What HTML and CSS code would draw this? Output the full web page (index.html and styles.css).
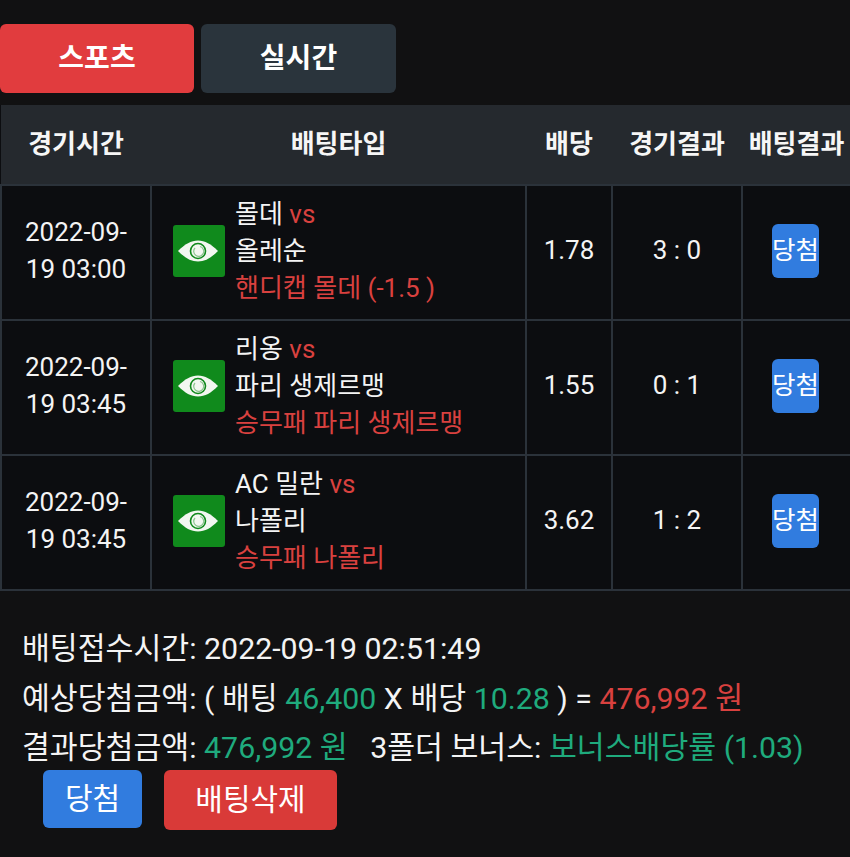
FILE: index.html
```html
<!DOCTYPE html>
<html lang="ko">

<head>
    <meta charset="UTF-8">
    <title>배팅내역</title>
    <meta name="viewport" content="width=device-width, initial-scale=1">
    <link rel="stylesheet" href="styles.css">
</head>

<body>
    <div class="tabs">
        <a class="tab tab-active">스포츠</a>
        <a class="tab">실시간</a>
    </div>

    <table class="bet-table">
        <colgroup>
            <col class="col-time">
            <col class="col-type">
            <col class="col-odds">
            <col class="col-score">
            <col class="col-result">
        </colgroup>
        <thead>
            <tr>
                <th>경기시간</th>
                <th>배팅타입</th>
                <th>배당</th>
                <th>경기결과</th>
                <th>배팅결과</th>
            </tr>
        </thead>
        <tbody>
            <tr>
                <td>2022-09-<br>19 03:00</td>
                <td>
                    <div class="match">
                        <span class="eye-box">
                            <svg viewBox="0 0 52 52" width="52" height="52">
                                <path class="eye-white" d="M5 26C12 19 18 15.5 25 15.5S38 19 45 26c-7 7-13 10.500-20 10.500S12 33 5 26z" />
                                <circle class="eye-ring" cx="25" cy="26" r="7.500" />
                                <path class="eye-notch" d="M27 21.500a5 5 0 1 1-5 1.500" />
                            </svg>
                        </span>
                        <div class="match-text">
                            <div>몰데 <span class="red">vs</span></div>
                            <div>올레순</div>
                            <div class="red">핸디캡 몰데 (-1.5 )</div>
                        </div>
                    </div>
                </td>
                <td>1.78</td>
                <td>3 : 0</td>
                <td><span class="win-badge">당첨</span></td>
            </tr>
            <tr>
                <td>2022-09-<br>19 03:45</td>
                <td>
                    <div class="match">
                        <span class="eye-box">
                            <svg viewBox="0 0 52 52" width="52" height="52">
                                <path class="eye-white" d="M5 26C12 19 18 15.5 25 15.5S38 19 45 26c-7 7-13 10.500-20 10.500S12 33 5 26z" />
                                <circle class="eye-ring" cx="25" cy="26" r="7.500" />
                                <path class="eye-notch" d="M27 21.500a5 5 0 1 1-5 1.500" />
                            </svg>
                        </span>
                        <div class="match-text">
                            <div>리옹 <span class="red">vs</span></div>
                            <div>파리 생제르맹</div>
                            <div class="red">승무패 파리 생제르맹</div>
                        </div>
                    </div>
                </td>
                <td>1.55</td>
                <td>0 : 1</td>
                <td><span class="win-badge">당첨</span></td>
            </tr>
            <tr>
                <td>2022-09-<br>19 03:45</td>
                <td>
                    <div class="match">
                        <span class="eye-box">
                            <svg viewBox="0 0 52 52" width="52" height="52">
                                <path class="eye-white" d="M5 26C12 19 18 15.5 25 15.5S38 19 45 26c-7 7-13 10.500-20 10.500S12 33 5 26z" />
                                <circle class="eye-ring" cx="25" cy="26" r="7.500" />
                                <path class="eye-notch" d="M27 21.500a5 5 0 1 1-5 1.500" />
                            </svg>
                        </span>
                        <div class="match-text">
                            <div>AC 밀란 <span class="red">vs</span></div>
                            <div>나폴리</div>
                            <div class="red">승무패 나폴리</div>
                        </div>
                    </div>
                </td>
                <td>3.62</td>
                <td>1 : 2</td>
                <td><span class="win-badge">당첨</span></td>
            </tr>
        </tbody>
    </table>

    <div class="summary">
        <p>배팅접수시간: 2022-09-19 02:51:49</p>
        <p>예상당첨금액: ( 배팅 <span class="green">46,400</span> X 배당 <span class="green">10.28</span> ) = <span class="red">476,992 원</span></p>
        <p>결과당첨금액: <span class="green">476,992 원</span> &nbsp; 3폴더 보너스: <span class="green">보너스배당률 (1.03)</span></p>
    </div>

    <div class="actions">
        <a class="btn btn-blue">당첨</a>
        <a class="btn btn-red">배팅삭제</a>
    </div>
</body>

</html>
```

FILE: styles.css
```css
body {
    background: #111112;
    color: #f4f4f4;
    font-family: Roboto, 'Noto Sans CJK KR', sans-serif;
    font-size: 26px;
    margin: 0;
    padding: 24px 0 0 0;
}

.tabs {
    display: flex;
    gap: 7px;
}

.tab {
    width: 195px;
    height: 64px;
    padding-bottom: 5px;
    display: flex;
    align-items: center;
    justify-content: center;
    background: #2a343c;
    border-radius: 6px;
    color: #fff;
    font-weight: 700;
    font-size: 28px;
}

.tab-active {
    width: 194px;
    background: #e13c3e;
}

.bet-table {
    width: 850px;
    table-layout: fixed;
    border-collapse: collapse;
    margin-top: 12px;
    background: #0c0d10;
}

.col-time {
    width: 150px;
}

.col-type {
    width: 375px;
}

.col-odds {
    width: 86px;
}

.col-score {
    width: 130px;
}

.col-result {
    width: 109px;
}

.bet-table th {
    height: 73px;
    padding: 0 0 6px 0;
    background: #25292e;
    color: #f6f6f6;
    font-size: 26px;
    font-weight: 700;
    text-align: center;
    white-space: nowrap;
}

.bet-table td {
    height: 129px;
    padding: 0 0 4px 0;
    border: 2px solid #2b323a;
    text-align: center;
    line-height: 37px;
}

.match {
    display: flex;
    align-items: center;
    gap: 10px;
    padding-left: 21px;
    text-align: left;
}

.match-text {
    padding-top: 2px;
}

.eye-box {
    width: 52px;
    height: 52px;
    flex: none;
    background: #108a1c;
    border-radius: 3px;
}

.eye-box svg {
    display: block;
}

.eye-white {
    fill: #f2f7f0;
}

.eye-ring {
    fill: none;
    stroke: #108a1c;
    stroke-width: 1.6;
}

.eye-notch {
    fill: none;
    stroke: #8cc48f;
    stroke-width: 1.2;
}

.red {
    color: #d9413f;
}

.green {
    color: #1fab7d;
}

.win-badge {
    display: inline-block;
    width: 47px;
    height: 54px;
    margin-right: 2px;
    background: #317cdf;
    border-radius: 6px;
    color: #fff;
    font-size: 25.5px;
    line-height: 52px;
    vertical-align: middle;
    white-space: nowrap;
}

.summary {
    padding: 36px 0 0 22px;
}

.summary p {
    margin: 0;
    font-size: 30.3px;
    line-height: 44px;
    white-space: nowrap;
}

.summary p + p {
    margin-top: 5.5px;
}

.actions {
    display: flex;
    align-items: flex-start;
    gap: 22px;
    padding: 0 0 0 43px;
}

.btn {
    display: flex;
    align-items: center;
    justify-content: center;
    height: 54px;
    padding-bottom: 6px;
    border-radius: 6px;
    color: #fff;
    font-size: 30px;
}

.btn-blue {
    width: 99px;
    height: 52px;
    background: #317cdf;
}

.btn-red {
    width: 173px;
    background: #d93a38;
}
```
